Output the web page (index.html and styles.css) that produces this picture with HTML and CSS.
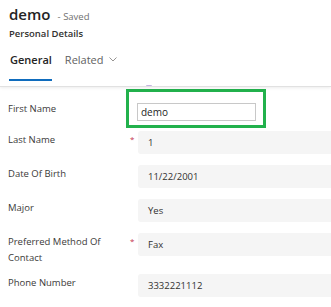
FILE: index.html
```html
<!DOCTYPE html>
<html lang="en">
<head>
    <meta charset="UTF-8">
    <meta name="viewport" content="width=device-width, initial-scale=1.0">
    <title>demo - Saved</title>
    <link rel="stylesheet" href="styles.css">
</head>
<body>
    <!-- Record header -->
    <div class="header">
        <div class="title-row">
            <span class="title">demo</span>
            <span class="status">- Saved</span>
        </div>
        <div class="subtitle">Personal Details</div>

        <div class="tabs">
            <div class="tab active">General</div>
            <div class="tab">
                Related
                <svg class="chevron" width="8" height="5" viewBox="0 0 8 5">
                    <path d="M0.5 0.5 L4 4 L7.5 0.5" fill="none" stroke="#8a8886" stroke-width="0.9"/>
                </svg>
            </div>
        </div>
    </div>

    <!-- Form fields -->
    <div class="form">
        <span class="peek"></span>

        <div class="row first">
            <div class="label">First Name</div>
            <div class="highlight">
                <input class="text-input" type="text" value="demo">
            </div>
        </div>

        <div class="row">
            <div class="label">Last Name</div>
            <div class="req">*</div>
            <div class="field">1</div>
        </div>

        <div class="row">
            <div class="label">Date Of Birth</div>
            <div class="req"></div>
            <div class="field">11/22/2001</div>
        </div>

        <div class="row">
            <div class="label">Major</div>
            <div class="req"></div>
            <div class="field">Yes</div>
        </div>

        <div class="row">
            <div class="label">Preferred Method Of Contact</div>
            <div class="req">*</div>
            <div class="field">Fax</div>
        </div>

        <div class="row">
            <div class="label">Phone Number</div>
            <div class="req"></div>
            <div class="field">3332221112</div>
        </div>
    </div>
</body>
</html>
```

FILE: styles.css
```css
body {
    margin: 0;
    font-family: "Open Sans", "Noto Sans", sans-serif;
    color: #323130;
    background: #ffffff;
    overflow: hidden;
}
.header {
    padding: 4px 9px 0 9px;
    border-bottom: 1px solid #e1e1e1;
    box-shadow: 0 1px 3px rgba(0, 0, 0, 0.08);
    position: relative;
    z-index: 1;
}
.title-row {
    line-height: 20px;
    white-space: nowrap;
}
.title {
    font-size: 15px;
    font-weight: 600;
    color: #242424;
}
.status {
    font-size: 9.5px;
    color: #707070;
    margin-left: 3px;
}
.subtitle {
    margin-top: -1px;
    font-size: 9.5px;
    font-weight: 600;
    line-height: 16px;
    color: #323130;
}
.tabs {
    display: flex;
    gap: 13px;
    margin-top: 10px;
}
.tab {
    font-size: 11px;
    line-height: 16px;
    padding-bottom: 18px;
    color: #616161;
    display: flex;
    align-items: center;
    gap: 5px;
}
.tab.active {
    color: #242424;
    font-weight: 600;
    padding-left: 1px;
    box-shadow: inset 0 -5px 0 #ffffff, inset 0 -7px 0 #0f6cbd;
}
.chevron {
    margin-top: -2px;
}
.form {
    position: relative;
    padding: 2px 0 0 8px;
}
.peek {
    position: absolute;
    left: 146px;
    top: -2px;
    width: 6px;
    height: 2px;
    border-radius: 1px;
    background: #c3b4e0;
}
.row {
    display: flex;
    align-items: flex-start;
    margin-bottom: 8px;
}
.row.first {
    align-items: center;
    margin-bottom: 3px;
}
.label {
    width: 118px;
    flex: none;
    padding-top: 1px;
    font-size: 9.5px;
    line-height: 16px;
    color: #3b3a39;
}
.req {
    width: 12px;
    flex: none;
    font-size: 8px;
    line-height: 16px;
    color: #c4314b;
    padding-left: 4px;
    box-sizing: border-box;
}
.field {
    flex: 1;
    height: 23px;
    margin-bottom: 3px;
    margin-right: -8px;
    padding-left: 10px;
    background: #f5f5f5;
    border-radius: 3px 0 0 3px;
    font-size: 9.5px;
    line-height: 23px;
    color: #323130;
}
.highlight {
    width: 140px;
    height: 39px;
    box-sizing: border-box;
    border: 3px solid #22b14c;
    padding: 7px 7px 8px 8px;
}
.text-input {
    width: 100%;
    height: 18px;
    box-sizing: border-box;
    margin: 0;
    border: 1px solid #c8c8c8;
    padding: 0 3px;
    font-family: "Open Sans", "Noto Sans", sans-serif;
    font-size: 10px;
    color: #242424;
    background: #ffffff;
    outline: none;
}
```
